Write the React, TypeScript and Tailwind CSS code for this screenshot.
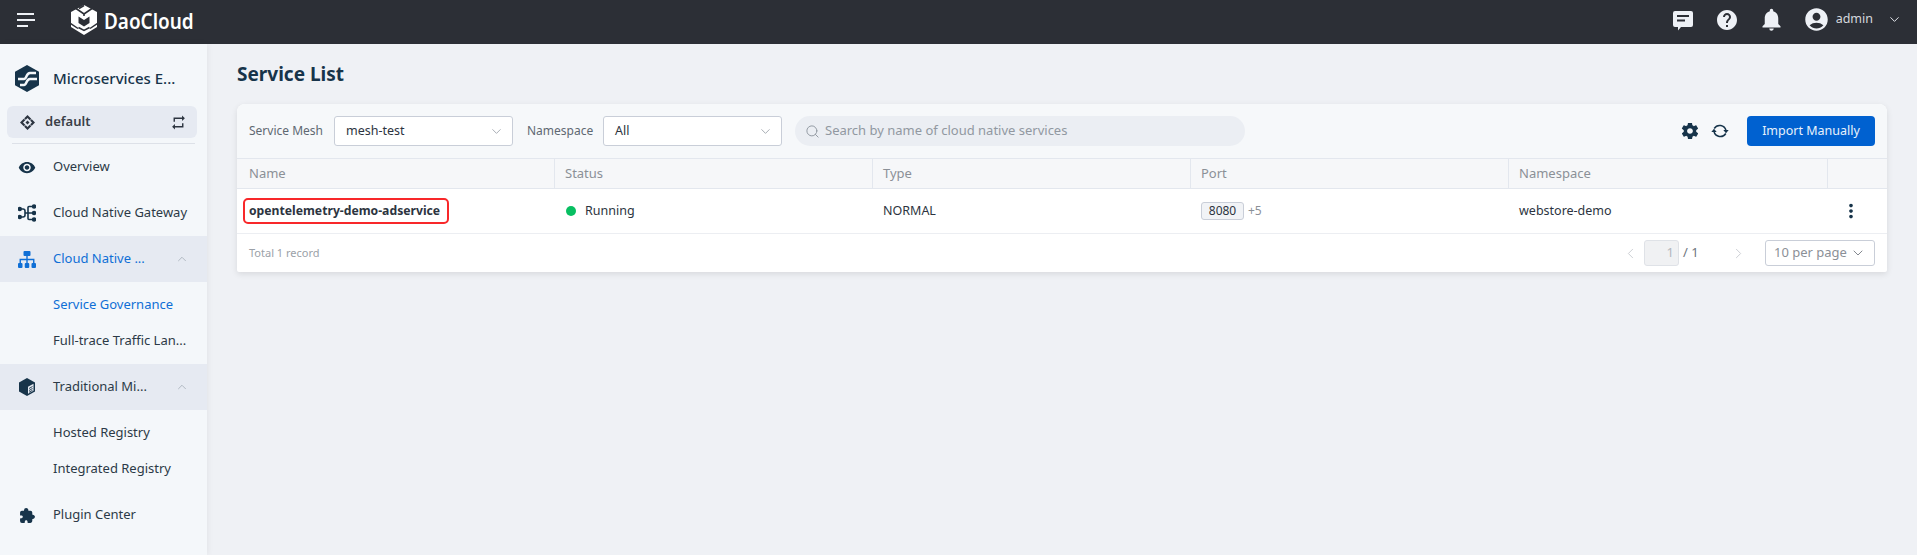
import React from "react";
import { ChevronDown, ChevronUp, ChevronLeft, ChevronRight, Search } from "lucide-react";
import { MdVisibility, MdHelp, MdNotifications, MdAccountCircle, MdMoreVert, MdRepeat } from "react-icons/md";
import { IoExtensionPuzzle } from "react-icons/io5";
import { IoMdSettings } from "react-icons/io";

function Chat() {
  return (
    <svg width="22" height="22" viewBox="0 0 22 22">
      <path fill="#eef1f6" d="M3 2h16a2 2 0 0 1 2 2v12a2 2 0 0 1-2 2H9l-3 3.500V18H3a2 2 0 0 1-2-2V4a2 2 0 0 1 2-2z" />
      <rect x="5" y="6" width="12" height="2" fill="#2c2f36" />
      <rect x="5" y="10.500" width="8" height="2" fill="#2c2f36" />
    </svg>
  );
}

function DaoLogo() {
  return (
    <svg width="28" height="30" viewBox="0 0 28 30">
      <path fill="#fff" d="M14 0l13 7v15l-13 8-13-8V7z" />
      <path fill="none" stroke="#2c2f36" strokeWidth="1.600" d="M6 3.500L14 9l8-5.500M9 3.500L14 .5M14 9v2" />
      <path fill="#2c2f36" d="M8.500 11.500L14 15l5.500-3.500V18L14 21.500 8.500 18z" />
      <path fill="none" stroke="#2c2f36" strokeWidth="1.500" d="M0 18l8 5.500M28 18l-8 5.500M8.500 22.500l5.500 3 5.500-3" />
    </svg>
  );
}

function AppLogo() {
  return (
    <svg width="24" height="27" viewBox="0 0 24 27">
      <path fill="#17344a" d="M12 0l12 6.800v13.400L12 27 0 20.200V6.800z" />
      <path fill="none" stroke="#f4f7fa" strokeWidth="2.500" d="M3 14h6c3 0 2-6 6-6h6M5 20h4c3 0 2-6 6-6h7" />
    </svg>
  );
}

function Workspace() {
  return (
    <svg width="15" height="15" viewBox="0 0 15 15">
      <path fill="#2c3440" d="M7.500 0L15 7.500 7.500 15 0 7.500zM7.500 3L3 7.500l4.500 4.500L12 7.500z" />
      <path fill="#2c3440" d="M7.500 5.500l2 2-2 2-2-2z" />
      <path stroke="#e6eaf2" strokeWidth="0.800" d="M3 2.500l3 3M12.500 3l-3 3M3 12.500l3-3M12.500 12l-3-3" />
    </svg>
  );
}

function Gateway() {
  return (
    <svg width="18" height="18" viewBox="0 0 18 18" fill="none" stroke="#17344a" strokeWidth="1.600">
      <path d="M1.500 5H5c1.500 0 2 1 2 2v4c0 1-.5 2-2 2H1.500M7 9h9.500M10 9V3.500c0-.6.400-1 1-1h5.500M10 9v5.500c0 .6.400 1 1 1h5.500" />
      <circle cx="1.800" cy="5" r="1.400" fill="#17344a" />
      <circle cx="1.800" cy="13" r="1.400" fill="#17344a" />
      <circle cx="16" cy="2.500" r="1.400" fill="#17344a" />
      <circle cx="16" cy="9" r="1.400" fill="#17344a" />
      <circle cx="16" cy="15.500" r="1.400" fill="#17344a" />
    </svg>
  );
}

function Tree() {
  return (
    <svg width="18" height="17" viewBox="0 0 18 17" fill="#0f6fd6">
      <rect x="5.500" y="0" width="7" height="5" rx="1" />
      <rect x="0" y="12" width="4.500" height="5" rx="1" />
      <rect x="6.750" y="12" width="4.500" height="5" rx="1" />
      <rect x="13.500" y="12" width="4.500" height="5" rx="1" />
      <path fill="none" stroke="#0f6fd6" strokeWidth="1.400" d="M9 5v7M2.250 12V8.500h13.500V12" />
    </svg>
  );
}

function Cube() {
  return (
    <svg width="16" height="18" viewBox="0 0 16 18">
      <path fill="#17344a" d="M8 0l8 4.500v9L8 18l-8-4.500v-9z" />
      <path fill="#e6eaf2" d="M9 8.800l5.500-3v6.900l-5.500 3z" />
      <path stroke="#17344a" strokeWidth="0.900" d="M10 10.500l3.500-2M10 12.500l3.500-2M10 14.300l3.500-2" />
    </svg>
  );
}

function Refresh() {
  return (
    <svg width="18" height="18" viewBox="0 0 18 18" className="ml-[11px]">
      <path fill="none" stroke="#17344a" strokeWidth="1.500" d="M3.200 6.500A6.500 6.500 0 0 1 15 8.500M14.800 11.500A6.500 6.500 0 0 1 3 9.500" />
      <path fill="#17344a" d="M12.300 8h5.400L15 11.200zM.3 10h5.400L3 6.800z" />
    </svg>
  );
}

function NavItem({ icon, label, active, group, chevron }: { icon: React.ReactNode; label: string; active?: boolean; group?: boolean; chevron?: boolean }) {
  return (
    <div className={`flex h-[46px] items-center pr-[18px] pl-[18px] ${group ? "bg-[#e6eaf2]" : ""}`}>
      <span className="flex w-[18px] justify-center">{icon}</span>
      <span className={`ml-[17px] flex-1 pb-[1px] text-[13px] whitespace-nowrap ${active ? "text-[#0f6fd6]" : "text-[#2c3a47]"}`}>{label}</span>
      {chevron && <ChevronUp size={14} strokeWidth={1.200} className="text-[#9aa3ad]" />}
    </div>
  );
}

function SubItem({ label, active }: { label: string; active?: boolean }) {
  return (
    <div className={`flex h-[36px] items-center pl-[53px] text-[13px] whitespace-nowrap ${active ? "text-[#0f6fd6]" : "text-[#2c3a47]"}`}>{label}</div>
  );
}

function Field({ label, value, labelClass }: { label: string; value: string; labelClass: string }) {
  return (
    <>
      <span className={`text-[12px] whitespace-nowrap text-[#5f6872] ${labelClass}`}>{label}</span>
      <div className="flex h-[30px] w-[179px] items-center justify-between rounded-[3px] border border-[#c9ced8] bg-white pr-[8px] pl-[11px] text-[12.5px] text-[#2c3440]">
        {value}
        <ChevronDown size={15} strokeWidth={1.200} className="text-[#8c939c]" />
      </div>
    </>
  );
}

const columns = [
  { label: "Name", w: "w-[318px] pl-[12px]" },
  { label: "Status", w: "w-[318px] pl-[10px]" },
  { label: "Type", w: "w-[318px] pl-[10px]" },
  { label: "Port", w: "w-[318px] pl-[10px]" },
  { label: "Namespace", w: "w-[319px] pl-[10px]" },
];

export default function App() {
  return (
    <div className="flex h-[555px] w-[1917px] flex-col overflow-hidden bg-[#eff1f5] font-['Noto_Sans',sans-serif]">
      <header className="flex h-[44px] shrink-0 items-center bg-[#2c2f36] pb-[5px]">
        <div className="ml-[17px] flex w-[18px] flex-col gap-[4px]">
          <span className="h-[2px] w-[17px] bg-[#eef1f6]" />
          <span className="h-[2px] w-[18px] bg-[#eef1f6]" />
          <span className="h-[2px] w-[11px] bg-[#eef1f6]" />
        </div>
        <div className="ml-[35px] flex items-center gap-[6px]">
          <DaoLogo />
          <span className="origin-left scale-x-[0.86] text-[22px] leading-none font-semibold text-white">DaoCloud</span>
        </div>
        <div className="ml-auto flex items-center">
          <Chat />
          <span className="ml-[21px] flex"><MdHelp size={24} className="text-[#eef1f6]" /></span>
          <span className="ml-[19px] flex"><MdNotifications size={27} className="text-[#eef1f6]" /></span>
          <span className="ml-[18px] flex"><MdAccountCircle size={27} className="text-[#eef1f6]" /></span>
          <span className="ml-[6px] text-[12.5px] text-[#d5d8de]">admin</span>
          <ChevronDown size={15} strokeWidth={1.500} className="mr-[15px] ml-[14px] text-[#eef1f6]" />
        </div>
      </header>
      <div className="flex min-h-0 flex-1">
        <aside className="w-[207px] shrink-0 bg-[#f4f7fa] shadow-[1px_0_6px_rgba(0,0,0,0.06)]">
          <div className="flex items-center pt-[21px] pl-[15px]">
            <AppLogo />
            <span className="ml-[14px] text-[15px] leading-[27px] font-medium text-[#17344a]">Microservices E...</span>
          </div>
          <div className="mt-[14px] mr-[10px] ml-[7px] flex h-[32px] items-center rounded-[6px] bg-[#e6eaf2] pr-[10px] pl-[13px]">
            <Workspace />
            <span className="ml-[10px] flex-1 text-[13px] font-semibold text-[#3a4048]">default</span>
            <MdRepeat size={17} className="text-[#2c3440]" />
          </div>
          <div className="mx-[12px] mt-[5px] h-px bg-[#dde1e8]" />
          <NavItem icon={<MdVisibility size={19} className="text-[#17344a]" />} label="Overview" />
          <NavItem icon={<Gateway />} label="Cloud Native Gateway" />
          <NavItem icon={<Tree />} label="Cloud Native ..." active group chevron />
          <div className="pt-[5px] pb-[5px]">
            <SubItem label="Service Governance" active />
            <SubItem label="Full-trace Traffic Lan..." />
          </div>
          <NavItem icon={<Cube />} label="Traditional Mi..." group chevron />
          <div className="pt-[5px] pb-[5px]">
            <SubItem label="Hosted Registry" />
            <SubItem label="Integrated Registry" />
          </div>
          <NavItem icon={<IoExtensionPuzzle size={17} className="text-[#17344a]" />} label="Plugin Center" />
        </aside>
        <main className="min-w-0 flex-1 pt-[15px] pr-[30px] pl-[30px]">
          <h1 className="text-[19px] leading-[30px] font-bold text-[#17344a]">Service List</h1>
          <section className="mt-[15px] overflow-hidden rounded-t-[8px] rounded-b-[2px] bg-white shadow-[0_2px_6px_rgba(0,0,0,0.1)]">
            <div className="flex h-[54px] items-center bg-[#f6f8fa] pr-[12px] pl-[12px]">
              <Field label="Service Mesh" value="mesh-test" labelClass="w-[85px]" />
              <span className="w-[14px]" />
              <Field label="Namespace" value="All" labelClass="w-[76px]" />
              <div className="ml-[13px] flex h-[30px] w-[450px] items-center rounded-[15px] bg-[#ebeef3] pl-[10px] text-[13px] text-[#9198a1]">
                <Search size={15} strokeWidth={1.500} className="mr-[5px] text-[#8e959e]" />
                Search by name of cloud native services
              </div>
              <div className="ml-auto flex items-center">
                <IoMdSettings size={20} className="text-[#17344a]" />
                <Refresh />
                <button className="ml-[18px] h-[30px] w-[128px] rounded-[4px] bg-[#0061d0] text-[12.5px] text-[#e8f1fb]">Import Manually</button>
              </div>
            </div>
            <div className="flex h-[31px] border-y border-[#e3e7ee] bg-[#f6f7f9] text-[13px] text-[#8b9097]">
              {columns.map((c) => (
                <div key={c.label} className={`flex items-center border-r border-[#e3e7ee] ${c.w}`}>{c.label}</div>
              ))}
              <div className="flex-1" />
            </div>
            <div className="flex h-[45px] items-center border-b border-[#eceef2] text-[12.5px] text-[#2c3440]">
              <div className="w-[318px] pl-[6px]">
                <span className="inline-flex h-[26px] w-[206px] items-center rounded-[5px] border-[2px] border-[#f8282a] pl-[4px] text-[12.2px] font-bold whitespace-nowrap">opentelemetry-demo-adservice</span>
              </div>
              <div className="flex w-[318px] items-center pl-[11px]">
                <span className="h-[10px] w-[10px] rounded-full bg-[#08bf62]" />
                <span className="ml-[9px]">Running</span>
              </div>
              <div className="w-[318px] pl-[10px]">NORMAL</div>
              <div className="flex w-[318px] items-center pl-[10px]">
                <span className="flex h-[18px] w-[43px] items-center justify-center rounded-[3px] border border-[#c9ced8] bg-[#f1f3f6] text-[12px]">8080</span>
                <span className="ml-[4px] text-[12px] text-[#8b9097]">+5</span>
              </div>
              <div className="w-[319px] pl-[10px]">webstore-demo</div>
              <div className="flex flex-1 justify-center pr-[14px]"><MdMoreVert size={22} className="text-[#17344a]" /></div>
            </div>
            <div className="flex h-[38px] items-center pr-[12px] pl-[12px] text-[#9ba1a8]">
              <span className="text-[11px]">Total 1 record</span>
              <ChevronLeft size={17} strokeWidth={1.200} className="ml-auto text-[#c4c8ce]" />
              <span className="ml-[5px] flex h-[26px] w-[35px] items-center justify-end rounded-[3px] border border-[#dfe2e7] bg-[#f0f1f3] pr-[4px] text-[13px] text-[#b3b7bd]">1</span>
              <span className="ml-[4px] w-[14px] text-[13px] whitespace-nowrap text-[#70767e]">/ 1</span>
              <ChevronRight size={17} strokeWidth={1.200} className="ml-[33px] text-[#c4c8ce]" />
              <div className="ml-[18px] flex h-[26px] w-[110px] items-center justify-between rounded-[3px] border border-[#c9ced8] pr-[8px] pl-[8px] text-[13px] text-[#8b9097]">
                10 per page
                <ChevronDown size={16} strokeWidth={1.300} className="text-[#6f757d]" />
              </div>
            </div>
          </section>
        </main>
      </div>
    </div>
  );
}
